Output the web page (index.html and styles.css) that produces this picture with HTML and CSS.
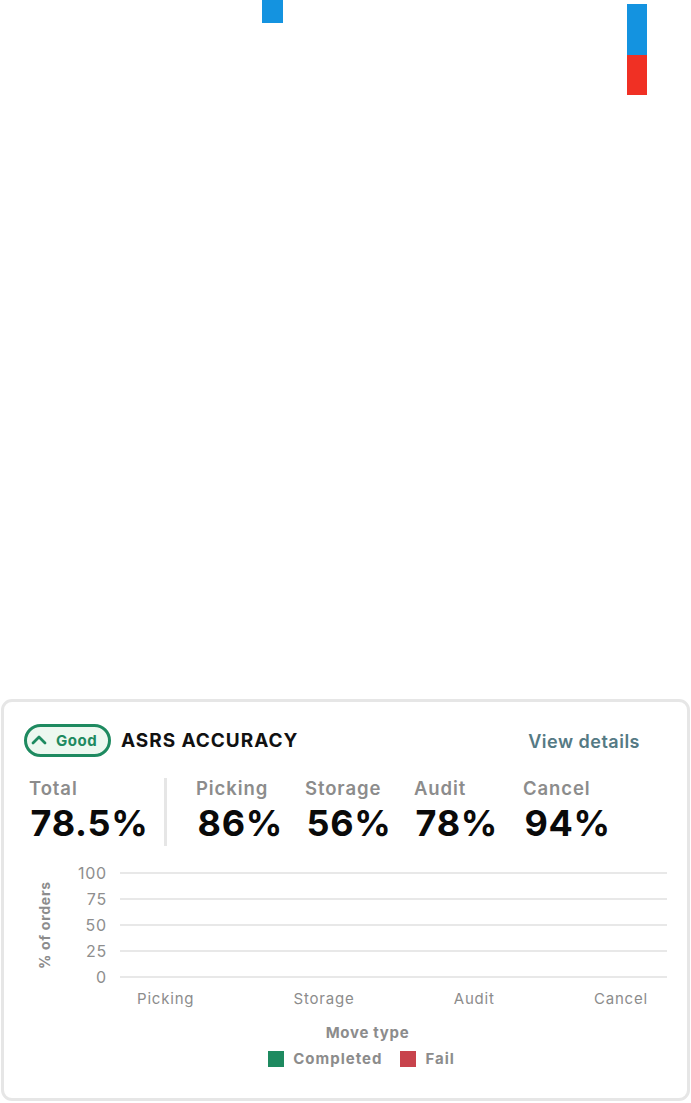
FILE: index.html
```html
<!DOCTYPE html>
<html>
<head>
<meta charset="utf-8">
<link rel="stylesheet" href="styles.css">
</head>
<body>
<div class="canvas">
  <svg class="bars" width="691" height="699" viewBox="0 0 691 699">
    <rect x="262" y="0" width="21" height="23" fill="#1493e0"/>
    <rect x="627" y="4" width="20" height="51" fill="#1493e0"/>
    <rect x="627" y="55" width="20" height="40" fill="#f03024"/>
  </svg>
</div>
<div class="card">
  <div class="header">
    <div class="title-group">
      <span class="badge">
        <svg class="chev" width="16" height="11" viewBox="0 0 16 11"><path d="M2 9 L8 3 L14 9" fill="none" stroke="#1e8a60" stroke-width="2.8" stroke-linecap="round" stroke-linejoin="round"/></svg>
        <span class="badge-text">Good</span>
      </span>
      <span class="title">ASRS ACCURACY</span>
    </div>
    <span class="link">View details</span>
  </div>
  <div class="stats">
    <div class="stat total">
      <div class="label">Total</div>
      <div class="value">78.5%</div>
    </div>
    <div class="divider"></div>
    <div class="stat col">
      <div class="label">Picking</div>
      <div class="value">86%</div>
    </div>
    <div class="stat col">
      <div class="label">Storage</div>
      <div class="value">56%</div>
    </div>
    <div class="stat col">
      <div class="label">Audit</div>
      <div class="value">78%</div>
    </div>
    <div class="stat col">
      <div class="label">Cancel</div>
      <div class="value">94%</div>
    </div>
  </div>
  <div class="chart">
    <div class="ytitle-wrap"><span class="ytitle">% of orders</span></div>
    <div class="plot">
      <div class="grid-row"><span class="tick">100</span><span class="line"></span></div>
      <div class="grid-row"><span class="tick">75</span><span class="line"></span></div>
      <div class="grid-row"><span class="tick">50</span><span class="line"></span></div>
      <div class="grid-row"><span class="tick">25</span><span class="line"></span></div>
      <div class="grid-row"><span class="tick">0</span><span class="line"></span></div>
    </div>
  </div>
  <div class="xlabels">
    <span>Picking</span><span>Storage</span><span>Audit</span><span>Cancel</span>
  </div>
  <div class="xtitle">Move type</div>
  <div class="legend">
    <span class="item"><span class="sw green"></span>Completed</span>
    <span class="item"><span class="sw red"></span>Fail</span>
  </div>
</div>
</body>
</html>
```
FILE: styles.css
```css
* { box-sizing: border-box; }
html, body { margin: 0; padding: 0; background: #fff; }
body { font-family: Inter, "Noto Sans", sans-serif; width: 691px; height: 1103px; overflow: hidden; }
.canvas { position: relative; height: 699px; }
.bars { position: absolute; left: 0; top: 0; display: block; }
.card {
  margin-left: 1px;
  width: 689px;
  height: 402px;
  border: 3px solid #e6e6e6;
  border-radius: 11px;
  padding: 22px 20px 0 20px;
}
.header { display: flex; align-items: center; justify-content: space-between; height: 33px; }
.title-group { display: flex; align-items: center; gap: 10px; }
.badge {
  display: inline-flex; align-items: center; gap: 9px;
  width: 87px; height: 33px;
  border: 3px solid #1e8a60; border-radius: 17px;
  background: #edf8f0;
  color: #1e8a60; font-weight: 700; font-size: 15px;
  padding-left: 4px;
}
.badge-text { letter-spacing: 0.5px; }
.chev { display: block; margin-top: -2px; }
.title { font-weight: 700; font-size: 19px; color: #111; letter-spacing: 0.95px; }
.link { font-weight: 600; font-size: 18px; color: #557a84; margin-right: 27px; margin-top: 2px; letter-spacing: 0.5px; }
.stats { display: flex; margin-top: 20px; height: 70px; }
.stat { display: flex; flex-direction: column; }
.stat.total { margin-left: 5px; width: 135px; flex-shrink: 0; }
.stat.col { width: 109px; flex-shrink: 0; }
.label { font-weight: 600; font-size: 18.5px; color: #8c8c8c; line-height: 22px; letter-spacing: 0.9px; }
.value { font-weight: 700; font-size: 36px; color: #0a0a0a; line-height: 40px; margin-top: 4px; margin-left: 1.5px; letter-spacing: 0.7px; }
.divider { width: 3px; background: #e6e6e6; height: 68px; margin-right: 29px; margin-top: 1px; flex-shrink: 0; }
.chart { display: flex; margin-top: 13px; height: 130px; flex-shrink: 0; }
.ytitle-wrap { width: 26px; position: relative; flex-shrink: 0; }
.ytitle {
  position: absolute; left: 20px; top: 65px;
  transform: translate(-50%, -50%) rotate(-90deg);
  white-space: nowrap; font-weight: 700; font-size: 14px; color: #8c8c8c; letter-spacing: 0.75px;
}
.plot { flex: 1; display: flex; flex-direction: column; }
.grid-row { display: flex; align-items: center; height: 26px; flex-shrink: 0; }
.tick { width: 57px; text-align: right; font-size: 16px; color: #8e8e8e; letter-spacing: 0.8px; line-height: 18px; }
.line { height: 2px; background: #e8e8e8; margin-left: 13px; width: 547px; }
.xlabels { display: flex; justify-content: space-between; margin-left: 113px; width: 511px; font-size: 15px; line-height: 18px; color: #8c8c8c; letter-spacing: 0.8px; }
.xtitle { text-align: center; font-weight: 700; font-size: 15px; line-height: 18px; color: #8c8c8c; margin-top: 16px; margin-left: 44px; letter-spacing: 0.7px; }
.legend { display: flex; justify-content: center; gap: 18px; margin-top: 8px; margin-left: 32px; line-height: 18px; }
.item { display: inline-flex; align-items: center; gap: 9px; font-weight: 700; font-size: 15px; color: #8c8c8c; letter-spacing: 1px; }
.sw { width: 16px; height: 16px; display: inline-block; }
.sw.green { background: #1e8a60; }
.sw.red { background: #c8434c; }
```
